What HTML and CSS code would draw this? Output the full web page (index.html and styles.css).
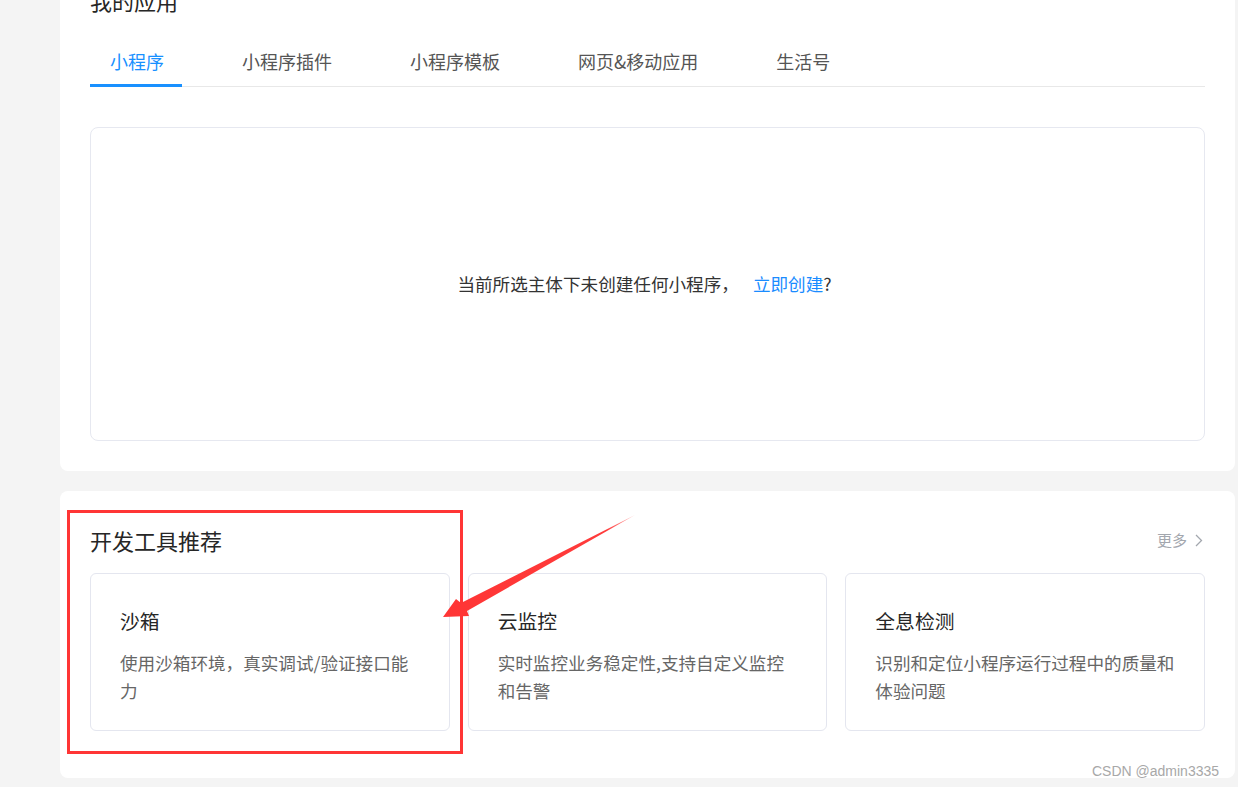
FILE: index.html
```html
<!DOCTYPE html>
<html lang="zh-CN">
<head>
<meta charset="utf-8">
<title>我的应用</title>
<link rel="stylesheet" href="styles.css">
</head>
<body>
<div class="page">
  <section class="card apps">
    <h2 class="card-title">我的应用</h2>
    <nav class="tabs">
      <a class="tab active">小程序</a>
      <a class="tab">小程序插件</a>
      <a class="tab">小程序模板</a>
      <a class="tab">网页&amp;移动应用</a>
      <a class="tab">生活号</a>
    </nav>
    <div class="empty">
      <p class="empty-text">当前所选主体下未创建任何小程序，<a class="link">立即创建</a>?</p>
    </div>
  </section>

  <section class="card tools">
    <div class="tools-head">
      <h2 class="card-title">开发工具推荐</h2>
      <a class="more">更多<svg class="chev" width="8" height="13" viewBox="0 0 8 13"><path d="M1 1 L6.5 6.5 L1 12" fill="none" stroke="#a3a7ae" stroke-width="1.3"/></svg></a>
    </div>
    <div class="tool-grid">
      <div class="tool">
        <h3 class="tool-title">沙箱</h3>
        <p class="tool-desc">使用沙箱环境，真实调试/验证接口能力</p>
      </div>
      <div class="tool">
        <h3 class="tool-title">云监控</h3>
        <p class="tool-desc">实时监控业务稳定性,支持自定义监控和告警</p>
      </div>
      <div class="tool">
        <h3 class="tool-title">全息检测</h3>
        <p class="tool-desc">识别和定位小程序运行过程中的质量和体验问题</p>
      </div>
    </div>
  </section>
</div>

<svg class="annot" width="1238" height="787" viewBox="0 0 1238 787">
  <defs>
    <linearGradient id="ag" x1="635" y1="515" x2="443" y2="617" gradientUnits="userSpaceOnUse">
      <stop offset="0" stop-color="#ff3b3b" stop-opacity="0.35"/>
      <stop offset="0.15" stop-color="#ff3b3b"/>
      <stop offset="1" stop-color="#ff3535"/>
    </linearGradient>
  </defs>
  <rect x="68.5" y="511.5" width="393" height="241" fill="none" stroke="#ff3535" stroke-width="3"/>
  <polygon points="443,617 456,599 461,603 635,515 467,611 469,616" fill="url(#ag)"/>
</svg>

<div class="watermark">CSDN @admin3335</div>
</body>
</html>
```

FILE: styles.css
```css
html, body {
  margin: 0;
  padding: 0;
  overflow: hidden;
}
body {
  position: relative;
  width: 1238px;
  height: 787px;
  background: #f4f4f4;
  font-family: "Noto Sans CJK SC", "Noto Sans", sans-serif;
  color: #333;
}
.page {
  display: flow-root;
  padding: 0 3px 0 60px;
}
.card {
  background: #fff;
  border-radius: 8px;
  padding: 34px 30px 30px;
}
.apps {
  margin-top: -49px;
}
.card-title {
  margin: 0;
  font-size: 22px;
  line-height: 30px;
  font-weight: 400;
  color: #262626;
}
.tabs {
  display: flex;
  gap: 40px;
  margin-top: 22px;
  border-bottom: 1px solid #e8e8e8;
}
.tab {
  padding: 11px 18px 10px 20px;
  font-size: 18px;
  line-height: 26px;
  color: #555;
  border-bottom: 3px solid transparent;
  margin-bottom: -1px;
  cursor: pointer;
}
.tab.active {
  color: #1890ff;
  border-bottom-color: #1890ff;
}
.empty {
  margin-top: 40px;
  height: 314px;
  box-sizing: border-box;
  border: 1px solid #e6e8f0;
  border-radius: 8px;
  display: flex;
  align-items: center;
  justify-content: center;
}
.empty-text {
  margin: 0 6px 0 0;
  font-size: 17.6px;
  line-height: 26px;
  color: #333;
}
.link {
  color: #1a8cff;
  margin-left: 14px;
  cursor: pointer;
}
.tools {
  margin-top: 20px;
  padding-top: 34px;
  padding-bottom: 47px;
}
.tools-head {
  display: flex;
  align-items: center;
  justify-content: space-between;
}
.more {
  display: flex;
  align-items: center;
  gap: 8px;
  font-size: 15px;
  line-height: 20px;
  color: #a3a7ae;
  margin-right: 2px;
  cursor: pointer;
}
.chev {
  display: block;
}
.tool-grid {
  margin-top: 18px;
  display: grid;
  grid-template-columns: repeat(3, 1fr);
  gap: 18px;
}
.tool {
  height: 158px;
  box-sizing: border-box;
  border: 1px solid #e4e6ef;
  border-radius: 6px;
  padding: 33px 20px 0 29px;
}
.tool-title {
  margin: 0;
  font-size: 19.8px;
  line-height: 28px;
  font-weight: 400;
  color: #262626;
}
.tool-desc {
  margin: 14px 0 0;
  width: 301px;
  font-size: 17.6px;
  line-height: 28px;
  color: #666;
}
.annot {
  position: absolute;
  left: 0;
  top: 0;
  pointer-events: none;
}
.watermark {
  position: absolute;
  left: 1092px;
  top: 762px;
  font-family: "Liberation Sans", Arial, sans-serif;
  font-size: 14px;
  line-height: 18px;
  color: #a8a8a8;
}
```
